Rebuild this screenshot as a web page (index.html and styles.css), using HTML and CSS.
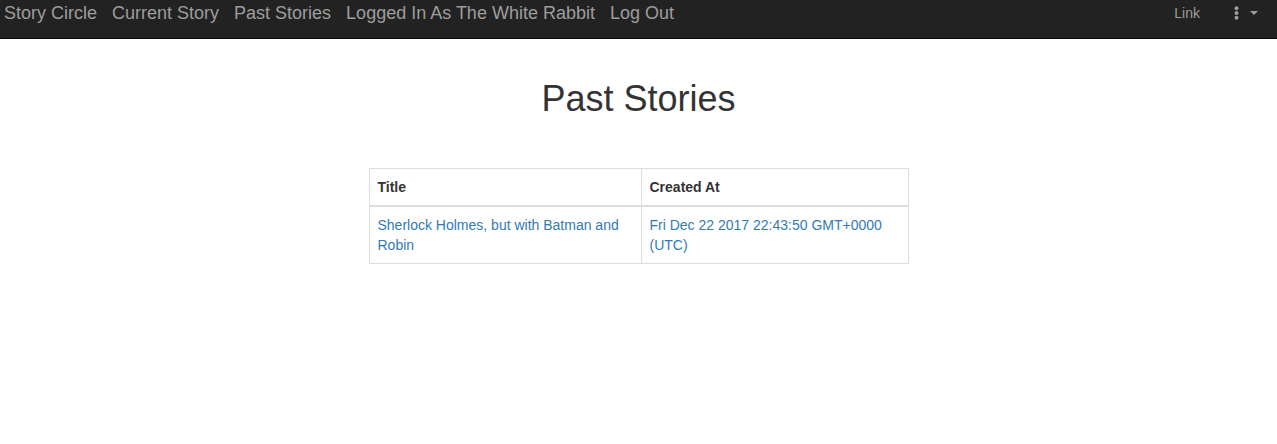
FILE: index.html
```html
<!DOCTYPE html>
<html lang="en">
<head>
<meta charset="utf-8">
<title>Past Stories</title>
<link rel="stylesheet" href="styles.css">
</head>
<body>
<nav class="navbar">
  <div class="nav-main">
    <a class="brand" href="#">Story Circle</a>
    <a class="brand" href="#">Current Story</a>
    <a class="brand" href="#">Past Stories</a>
    <a class="brand" href="#">Logged In As The White Rabbit</a>
    <a class="brand" href="#">Log Out</a>
  </div>
  <div class="nav-side">
    <a class="nav-link" href="#">Link</a>
    <button class="menu-toggle" type="button" aria-label="Menu">
      <svg class="dots" viewBox="0 0 5 14" aria-hidden="true"><circle cx="2.5" cy="2.2" r="2"/><circle cx="2.5" cy="7" r="2"/><circle cx="2.5" cy="11.8" r="2"/></svg>
      <span class="caret"></span>
    </button>
  </div>
</nav>
<main class="content">
  <h1 class="title">Past Stories</h1>
  <table class="stories">
    <thead>
      <tr><th class="story-title">Title</th><th>Created At</th></tr>
    </thead>
    <tbody>
      <tr>
        <td><a href="#">Sherlock Holmes, but with Batman and Robin</a></td>
        <td><a href="#">Fri Dec 22 2017 22:43:50 GMT+0000 (UTC)</a></td>
      </tr>
    </tbody>
  </table>
</main>
</body>
</html>
```
FILE: styles.css
```css
* {
  box-sizing: border-box;
}

body {
  margin: 0;
  font-family: "Liberation Sans", Arial, sans-serif;
  font-size: 14px;
  line-height: 20px;
  color: #333;
  background: #fff;
}

a {
  color: #337ab7;
  text-decoration: none;
}

.navbar {
  display: flex;
  justify-content: space-between;
  align-items: flex-start;
  padding: 3px 19px 15px 4px;
  background: #222;
  border-bottom: 1px solid #080808;
}

.nav-main {
  display: flex;
  gap: 15px;
}

.brand {
  font-size: 18px;
  color: #9d9d9d;
}

.nav-side {
  display: flex;
  gap: 34px;
}

.nav-link {
  color: #9d9d9d;
}

.menu-toggle {
  display: flex;
  align-items: center;
  gap: 11px;
  height: 20px;
  padding: 0;
  border: 0;
  background: none;
  color: #9d9d9d;
}

.dots {
  width: 5px;
  height: 14px;
  fill: currentColor;
}

.caret {
  border-top: 4px solid currentColor;
  border-right: 4px solid transparent;
  border-left: 4px solid transparent;
}

.content {
  display: flex;
  flex-direction: column;
  align-items: center;
  padding-top: 40px;
}

.title {
  margin: 0 0 49px;
  font-size: 36px;
  font-weight: 500;
  line-height: 40px;
}

.stories {
  width: 540px;
  max-width: 100%;
  border-collapse: collapse;
  border: 1px solid #ddd;
}

.stories th,
.stories td {
  padding: 8px;
  text-align: left;
  vertical-align: top;
  border: 1px solid #ddd;
}

.stories th {
  border-bottom-width: 2px;
}

.stories .story-title {
  width: 272px;
}
```
